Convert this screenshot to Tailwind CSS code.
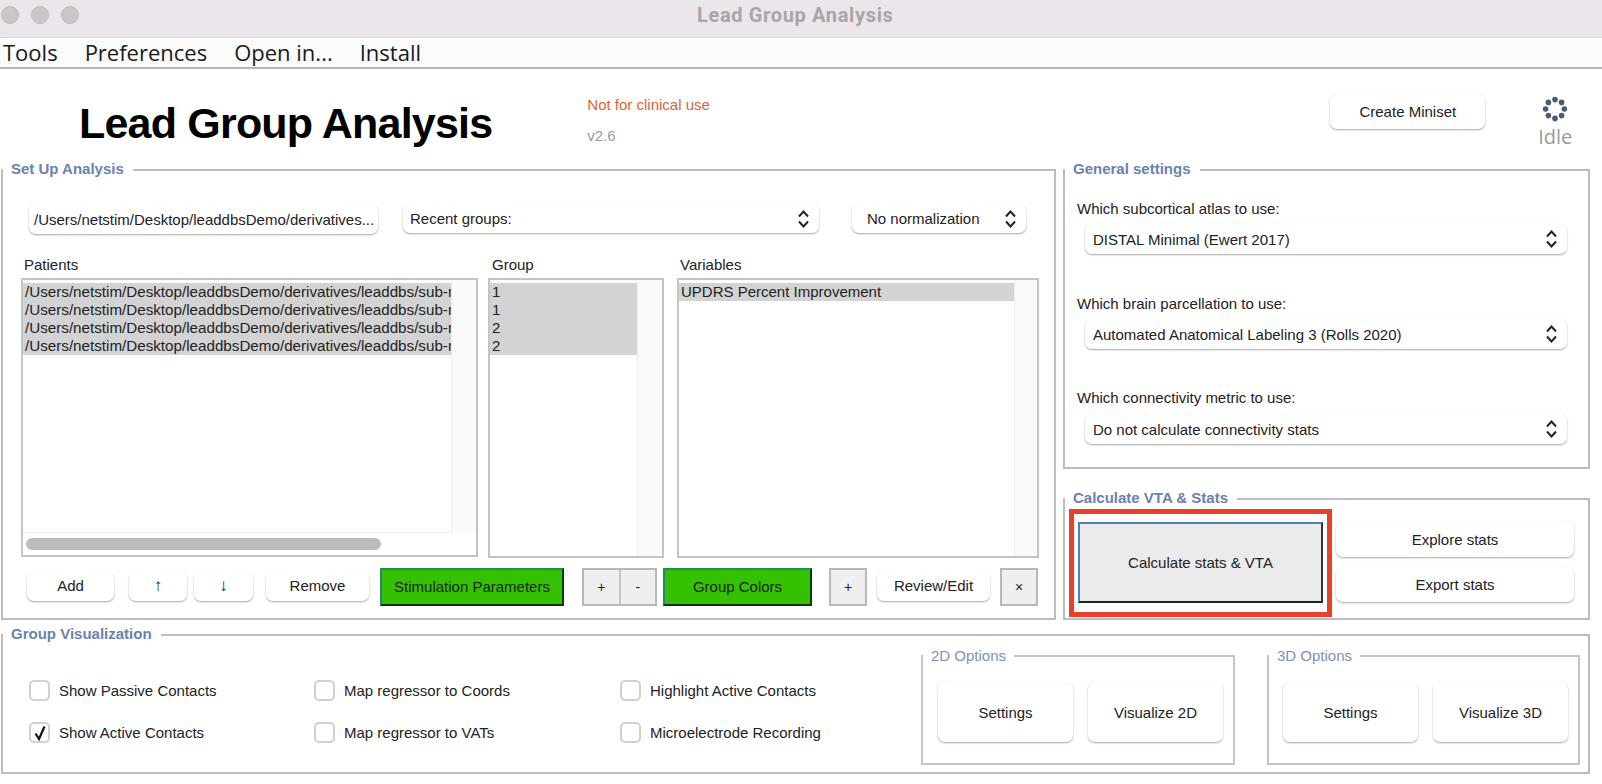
<!DOCTYPE html>
<html lang="en">
<head>
  <meta charset="UTF-8" />
  <title>Lead Group Analysis</title>
  <script src="https://cdn.jsdelivr.net/npm/@tailwindcss/browser@4"></script>
</head>
<body class="w-[1602px] h-[784px] overflow-hidden bg-white text-[15px] leading-none text-[#222] font-['Liberation_Sans',sans-serif]">

  <!-- Title bar -->
  <div class="h-[38px] flex items-center pb-[7px] bg-[#ece6ec] border-b border-[#d9d6d9]">
    <div class="flex gap-[12px] ml-[1px]">
      <span class="w-[18px] h-[18px] rounded-full bg-[#c9c5c9] border border-[#bdb9bd]"></span>
      <span class="w-[18px] h-[18px] rounded-full bg-[#c9c5c9] border border-[#bdb9bd]"></span>
      <span class="w-[18px] h-[18px] rounded-full bg-[#c9c5c9] border border-[#bdb9bd]"></span>
    </div>
    <span class="ml-[618px] text-[20px] tracking-[0.65px] font-bold text-[#a8a4a8] font-['Roboto',sans-serif]">Lead Group Analysis</span>
  </div>

  <!-- Menu bar -->
  <div class="h-[31px] flex items-center gap-[27px] pl-[3px] pb-[2px] bg-[#fbfbfb] border-b-2 border-[#b4b4b4] text-[22px] text-[#1a1a1a] font-['Open_Sans',sans-serif]">
    <span>Tools</span>
    <span>Preferences</span>
    <span>Open in...</span>
    <span>Install</span>
  </div>

  <!-- Header -->
  <div class="h-[100px] flex">
    <h1 class="ml-[79px] mt-[32px] text-[43px] tracking-[-0.8px] font-bold text-black leading-[44px]">Lead Group Analysis</h1>
    <div class="ml-[95px] mt-[28px] w-[743px]">
      <p class="text-[#d2683a]">Not for clinical use</p>
      <p class="mt-[16px] text-[#9a9a9a]">v2.6</p>
    </div>
    <button class="mt-[25px] w-[155px] h-[35px] rounded-[7px] bg-white shadow-[0_1px_2px_rgba(0,0,0,0.35)]">Create Miniset</button>
    <div class="ml-[45px] mt-[27px] flex flex-col items-center w-[50px]">
      <svg class="w-[26px] h-[26px]" viewBox="0 0 26 26" fill="#4a5a75">
        <circle cx="13" cy="3.6" r="2.8"/><circle cx="19.6" cy="6.4" r="2.8"/><circle cx="22.4" cy="13" r="2.8"/><circle cx="19.6" cy="19.6" r="2.8"/>
        <circle cx="13" cy="22.4" r="2.8"/><circle cx="6.4" cy="19.6" r="2.8"/><circle cx="3.6" cy="13" r="2.8"/><circle cx="6.4" cy="6.4" r="2.8"/>
      </svg>
      <span class="mt-[5px] text-[20px] text-[#9a9a9a] font-['Open_Sans',sans-serif]">Idle</span>
    </div>
  </div>

  <!-- Top panels -->
  <div class="flex items-start ml-[1px]">

    <!-- Set Up Analysis -->
    <section class="relative w-[1055px] h-[451px] border-2 border-[#bdbdbd] pl-[26px] pt-[33px]">
      <span class="absolute -top-[10px] left-0 bg-white pl-[8px] pr-[9px] font-bold text-[#6a82ad]">Set Up Analysis</span>

      <div class="flex items-start">
        <div class="w-[349px] h-[30px] flex items-center pl-[5px] rounded-[7px] shadow-[0_1px_2px_rgba(0,0,0,0.35)] whitespace-nowrap">/Users/netstim/Desktop/leaddbsDemo/derivatives...</div>
        <div class="ml-[25px] w-[416px] h-[29px] flex items-center justify-between pl-[7px] pr-[9px] rounded-[7px] shadow-[0_1px_2px_rgba(0,0,0,0.35)]">
          <span>Recent groups:</span>
          <svg class="w-[13px] h-[20px]" viewBox="0 0 13 20" fill="none" stroke="#222" stroke-width="2"><path d="M2 7.5 6.5 2.5 11 7.5M2 12.5 6.5 17.5 11 12.5"/></svg>
        </div>
        <div class="ml-[33px] w-[174px] h-[29px] flex items-center justify-between pl-[15px] pr-[9px] rounded-[7px] shadow-[0_1px_2px_rgba(0,0,0,0.35)]">
          <span>No normalization</span>
          <svg class="w-[13px] h-[20px]" viewBox="0 0 13 20" fill="none" stroke="#222" stroke-width="2"><path d="M2 7.5 6.5 2.5 11 7.5M2 12.5 6.5 17.5 11 12.5"/></svg>
        </div>
      </div>

      <div class="flex mt-[23px] -ml-[8px]">
        <!-- Patients -->
        <div class="w-[457px]">
          <label class="block pl-[3px] h-[13px]">Patients</label>
          <div class="mt-[8px] h-[279px] border-2 border-[#c4c4c4] flex flex-col">
            <div class="flex flex-1 min-h-0">
              <div class="w-[428px] pt-[3px] border-b border-[#eeeeee] overflow-hidden">
                <div class="h-[18px] leading-[18px] bg-[#d3d3d3] pl-[2px] whitespace-nowrap overflow-hidden text-[15.2px]">/Users/netstim/Desktop/leaddbsDemo/derivatives/leaddbs/sub-r</div>
                <div class="h-[18px] leading-[18px] bg-[#d3d3d3] pl-[2px] whitespace-nowrap overflow-hidden text-[15.2px]">/Users/netstim/Desktop/leaddbsDemo/derivatives/leaddbs/sub-r</div>
                <div class="h-[18px] leading-[18px] bg-[#d3d3d3] pl-[2px] whitespace-nowrap overflow-hidden text-[15.2px]">/Users/netstim/Desktop/leaddbsDemo/derivatives/leaddbs/sub-r</div>
                <div class="h-[18px] leading-[18px] bg-[#d3d3d3] pl-[2px] whitespace-nowrap overflow-hidden text-[15.2px]">/Users/netstim/Desktop/leaddbsDemo/derivatives/leaddbs/sub-r</div>
              </div>
              <div class="flex-1 bg-[#fafafa] border-l border-[#eeeeee]"></div>
            </div>
            <div class="h-[22px] flex items-center pl-[3px]">
              <div class="w-[355px] h-[12px] rounded-full bg-[#bcbcbc]"></div>
            </div>
          </div>
        </div>

        <!-- Group -->
        <div class="ml-[10px] w-[176px]">
          <label class="block pl-[4px] h-[13px]">Group</label>
          <div class="mt-[8px] h-[280px] border-2 border-[#c4c4c4] flex">
            <div class="w-[147px] pt-[3px]">
              <div class="h-[18px] leading-[18px] bg-[#d3d3d3] pl-[2px]">1</div>
              <div class="h-[18px] leading-[18px] bg-[#d3d3d3] pl-[2px]">1</div>
              <div class="h-[18px] leading-[18px] bg-[#d3d3d3] pl-[2px]">2</div>
              <div class="h-[18px] leading-[18px] bg-[#d3d3d3] pl-[2px]">2</div>
            </div>
            <div class="flex-1 bg-[#fafafa] border-l border-[#eeeeee]"></div>
          </div>
        </div>

        <!-- Variables -->
        <div class="ml-[13px] w-[362px]">
          <label class="block pl-[3px] h-[13px]">Variables</label>
          <div class="mt-[8px] h-[280px] border-2 border-[#c4c4c4] flex">
            <div class="w-[335px] pt-[3px]">
              <div class="h-[18px] leading-[18px] bg-[#d3d3d3] pl-[2px]">UPDRS Percent Improvement</div>
            </div>
            <div class="flex-1 bg-[#fafafa] border-l border-[#eeeeee]"></div>
          </div>
        </div>
      </div>

      <!-- Button row -->
      <div class="flex items-center mt-[10px] -ml-[2px]">
        <button class="w-[87px] h-[29px] mb-[2px] pb-[1px] rounded-[7px] shadow-[0_1px_2px_rgba(0,0,0,0.35)]">Add</button>
        <button class="ml-[15px] w-[58px] h-[29px] mb-[2px] pb-[2px] rounded-[7px] shadow-[0_1px_2px_rgba(0,0,0,0.35)] text-[17px]">↑</button>
        <button class="ml-[7px] w-[59px] h-[29px] mb-[2px] pb-[2px] rounded-[7px] shadow-[0_1px_2px_rgba(0,0,0,0.35)] text-[17px]">↓</button>
        <button class="ml-[13px] w-[103px] h-[29px] mb-[2px] pb-[1px] rounded-[7px] shadow-[0_1px_2px_rgba(0,0,0,0.35)]">Remove</button>
        <button class="ml-[11px] w-[184px] h-[38px] pb-[2px] bg-[#33c100] border-2 border-t-[#1f8f5a] border-l-[#1f8f5a] border-b-[#123312] border-r-[#123312]">Stimulation Parameters</button>
        <div class="ml-[18px] flex border-2 border-[#b8b8b8] bg-[#efefef] h-[38px] w-[75px]">
          <button class="flex-1 border-r-2 border-[#c4c4c4] text-[14px]">+</button>
          <button class="flex-1 text-[14px]">-</button>
        </div>
        <button class="ml-[6px] w-[149px] h-[38px] pb-[2px] bg-[#33c100] border-2 border-t-[#1f8f5a] border-l-[#1f8f5a] border-b-[#123312] border-r-[#123312]">Group Colors</button>
        <button class="ml-[17px] w-[38px] h-[38px] border-2 border-[#b8b8b8] bg-[#efefef] text-[14px]">+</button>
        <button class="ml-[10px] w-[113px] h-[29px] mb-[2px] pb-[1px] rounded-[7px] shadow-[0_1px_2px_rgba(0,0,0,0.35)]">Review/Edit</button>
        <button class="ml-[10px] w-[38px] h-[38px] border-2 border-[#b8b8b8] bg-[#efefef] text-[14px]">×</button>
      </div>
    </section>

    <!-- Right column -->
    <div class="ml-[7px] w-[527px]">
      <!-- General settings -->
      <section class="relative h-[300px] border-2 border-[#bdbdbd] pl-[12px] pt-[30px]">
        <span class="absolute -top-[10px] left-0 bg-white pl-[8px] pr-[9px] font-bold text-[#6a82ad]">General settings</span>
        <label class="block h-[14px]">Which subcortical atlas to use:</label>
        <div class="mt-[9px] ml-[8px] w-[482px] h-[30px] flex items-center justify-between pl-[8px] pr-[9px] rounded-[7px] shadow-[0_1px_2px_rgba(0,0,0,0.35)]">
          <span>DISTAL Minimal (Ewert 2017)</span>
          <svg class="w-[13px] h-[20px]" viewBox="0 0 13 20" fill="none" stroke="#222" stroke-width="2"><path d="M2 7.5 6.5 2.5 11 7.5M2 12.5 6.5 17.5 11 12.5"/></svg>
        </div>
        <label class="block h-[14px] mt-[42px]">Which brain parcellation to use:</label>
        <div class="mt-[9px] ml-[8px] w-[482px] h-[30px] flex items-center justify-between pl-[8px] pr-[9px] rounded-[7px] shadow-[0_1px_2px_rgba(0,0,0,0.35)]">
          <span>Automated Anatomical Labeling 3 (Rolls 2020)</span>
          <svg class="w-[13px] h-[20px]" viewBox="0 0 13 20" fill="none" stroke="#222" stroke-width="2"><path d="M2 7.5 6.5 2.5 11 7.5M2 12.5 6.5 17.5 11 12.5"/></svg>
        </div>
        <label class="block h-[14px] mt-[41px]">Which connectivity metric to use:</label>
        <div class="mt-[10px] ml-[8px] w-[482px] h-[30px] flex items-center justify-between pl-[8px] pr-[9px] rounded-[7px] shadow-[0_1px_2px_rgba(0,0,0,0.35)]">
          <span>Do not calculate connectivity stats</span>
          <svg class="w-[13px] h-[20px]" viewBox="0 0 13 20" fill="none" stroke="#222" stroke-width="2"><path d="M2 7.5 6.5 2.5 11 7.5M2 12.5 6.5 17.5 11 12.5"/></svg>
        </div>
      </section>

      <!-- Calculate VTA & Stats -->
      <section class="relative mt-[29px] h-[122px] border-2 border-[#bdbdbd] pl-[13px] pt-[22px] flex">
        <span class="absolute -top-[10px] left-0 bg-white pl-[8px] pr-[9px] font-bold text-[#6a82ad]">Calculate VTA &amp; Stats</span>
        <button class="relative w-[245px] h-[81px] bg-[#ebebeb] border-2 border-t-[#4d7fb5] border-l-[#4d7fb5] border-b-[#222222] border-r-[#333333]">
          Calculate stats &amp; VTA
          <span class="absolute -left-[11px] -top-[15px] -right-[11px] -bottom-[16px] border-[5px] border-[#e8402a]"></span>
        </button>
        <div class="ml-[13px] w-[238px] flex flex-col gap-[10px]">
          <button class="h-[35px] rounded-[7px] shadow-[0_1px_2px_rgba(0,0,0,0.35)]">Explore stats</button>
          <button class="h-[35px] rounded-[7px] shadow-[0_1px_2px_rgba(0,0,0,0.35)]">Export stats</button>
        </div>
      </section>
    </div>
  </div>

  <!-- Group Visualization -->
  <section class="relative ml-[1px] mt-[14px] w-[1589px] h-[140px] border-2 border-[#bdbdbd] flex">
    <span class="absolute -top-[10px] left-0 bg-white pl-[8px] pr-[9px] font-bold text-[#6a82ad]">Group Visualization</span>

    <div class="grid grid-cols-[285px_306px_auto] grid-rows-[21px_21px] gap-y-[21px] ml-[26px] mt-[44px] items-center w-[892px] whitespace-nowrap">
      <label class="flex items-center gap-[9px]"><span class="w-[21px] h-[21px] rounded-[5px] border-2 border-[#d0d0d0]"></span>Show Passive Contacts</label>
      <label class="flex items-center gap-[9px]"><span class="w-[21px] h-[21px] rounded-[5px] border-2 border-[#d0d0d0]"></span>Map regressor to Coords</label>
      <label class="flex items-center gap-[9px]"><span class="w-[21px] h-[21px] rounded-[5px] border-2 border-[#d0d0d0]"></span>Highlight Active Contacts</label>
      <label class="flex items-center gap-[9px]">
        <span class="w-[21px] h-[21px] rounded-[5px] border-2 border-[#d0d0d0] flex items-center justify-center">
          <svg class="w-[14px] h-[16px]" viewBox="0 0 14 16" fill="none" stroke="#111" stroke-width="2.2"><path d="M2.5 8.5 6 14 11.5 1.5"/></svg>
        </span>Show Active Contacts</label>
      <label class="flex items-center gap-[9px]"><span class="w-[21px] h-[21px] rounded-[5px] border-2 border-[#d0d0d0]"></span>Map regressor to VATs</label>
      <label class="flex items-center gap-[9px]"><span class="w-[21px] h-[21px] rounded-[5px] border-2 border-[#d0d0d0]"></span>Microelectrode Recording</label>
    </div>

    <div class="relative mt-[19px] w-[314px] h-[110px] border-2 border-[#c4c4c4] flex gap-[15px] pl-[15px] pt-[25px]">
      <span class="absolute -top-[9px] left-0 bg-white pl-[8px] pr-[8px] text-[#7d92b5]">2D Options</span>
      <button class="w-[135px] h-[60px] rounded-[7px] shadow-[0_1px_2px_rgba(0,0,0,0.35)]">Settings</button>
      <button class="w-[135px] h-[60px] rounded-[7px] shadow-[0_1px_2px_rgba(0,0,0,0.35)]">Visualize 2D</button>
    </div>
    <div class="relative ml-[32px] mt-[19px] w-[313px] h-[110px] border-2 border-[#c4c4c4] flex gap-[15px] pl-[14px] pt-[25px]">
      <span class="absolute -top-[9px] left-0 bg-white pl-[8px] pr-[8px] text-[#7d92b5]">3D Options</span>
      <button class="w-[135px] h-[60px] rounded-[7px] shadow-[0_1px_2px_rgba(0,0,0,0.35)]">Settings</button>
      <button class="w-[135px] h-[60px] rounded-[7px] shadow-[0_1px_2px_rgba(0,0,0,0.35)]">Visualize 3D</button>
    </div>
  </section>
</body>
</html>
